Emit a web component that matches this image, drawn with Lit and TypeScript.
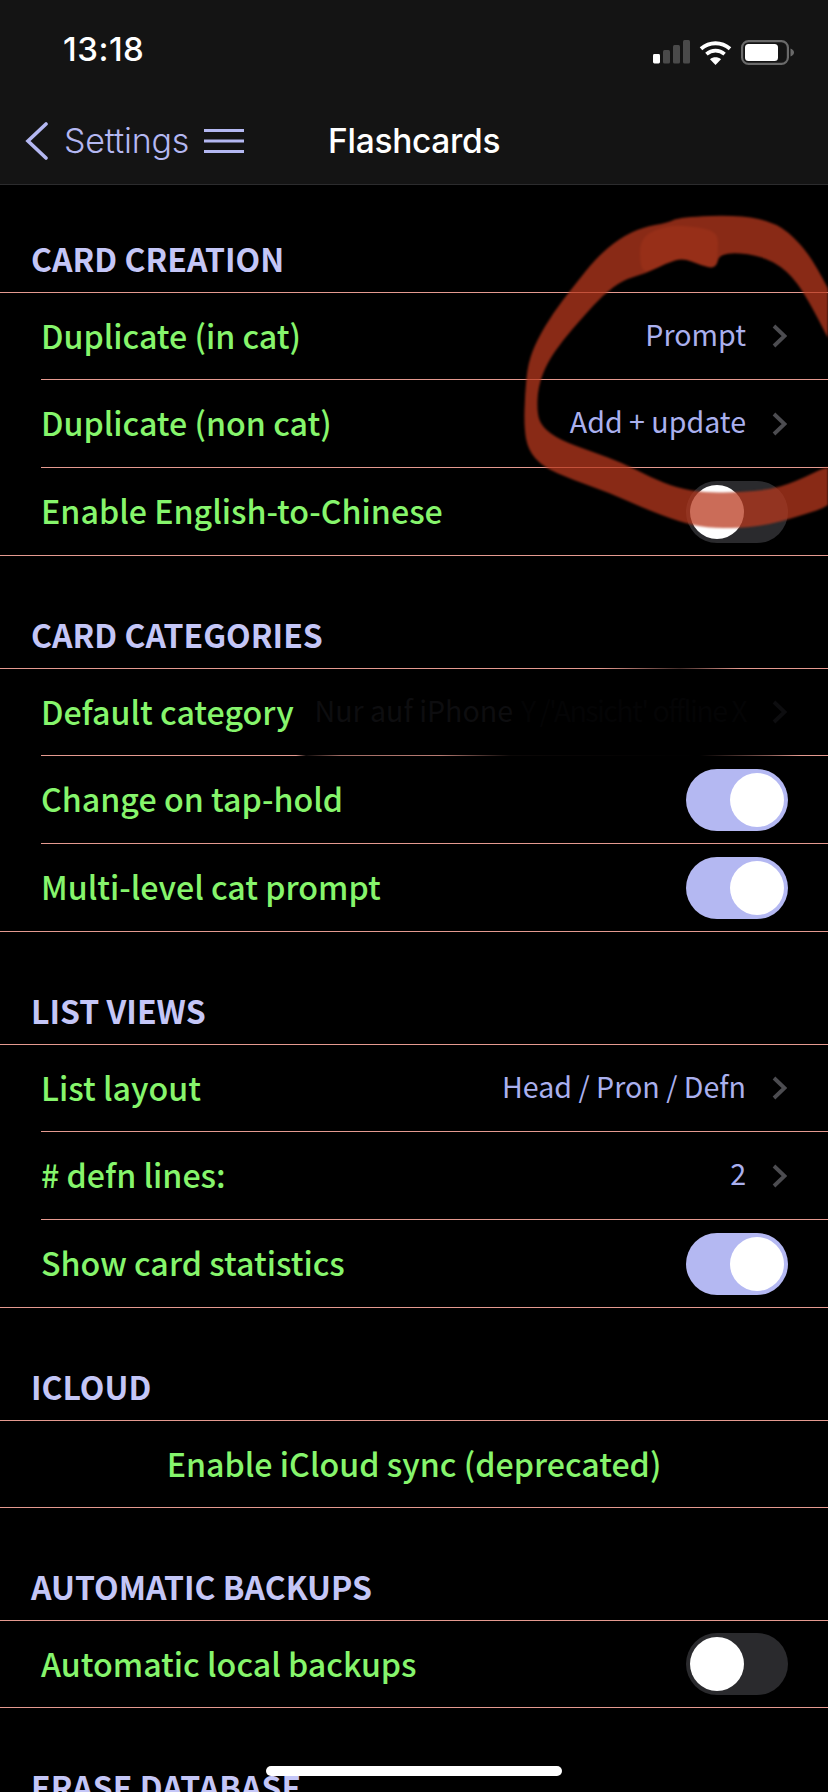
import { LitElement, css, html, svg } from "lit";
import { customElement, property } from "lit/decorators.js";

type Row =
  | { kind: "link"; label: string; value: string; ghost?: string }
  | { kind: "toggle"; label: string; on: boolean }
  | { kind: "center"; label: string };

interface Section {
  title: string;
  rows: Row[];
}

const SECTIONS: Section[] = [
  {
    title: "CARD CREATION",
    rows: [
      { kind: "link", label: "Duplicate (in cat)", value: "Prompt" },
      { kind: "link", label: "Duplicate (non cat)", value: "Add + update" },
      { kind: "toggle", label: "Enable English-to-Chinese", on: false },
    ],
  },
  {
    title: "CARD CATEGORIES",
    rows: [
      { kind: "link", label: "Default category", value: "", ghost: "Nur auf iPhone" },
      { kind: "toggle", label: "Change on tap-hold", on: true },
      { kind: "toggle", label: "Multi-level cat prompt", on: true },
    ],
  },
  {
    title: "LIST VIEWS",
    rows: [
      { kind: "link", label: "List layout", value: "Head / Pron / Defn" },
      { kind: "link", label: "# defn lines:", value: "2" },
      { kind: "toggle", label: "Show card statistics", on: true },
    ],
  },
  {
    title: "ICLOUD",
    rows: [{ kind: "center", label: "Enable iCloud sync (deprecated)" }],
  },
  {
    title: "AUTOMATIC BACKUPS",
    rows: [{ kind: "toggle", label: "Automatic local backups", on: false }],
  },
];

// hand-drawn red circle, traced edge by edge
const BAND: [number, number][] = [
  [680, 217], [740, 215], [777, 223], [800, 243], [817, 267], [840, 312],
  [840, 362], [807, 297], [787, 270], [760, 255], [720, 252], [716, 269],
  [700, 265], [683, 258], [667, 263], [647, 273], [623, 280], [603, 295],
  [583, 317], [563, 340], [547, 363], [538, 387], [537, 413], [542, 427],
  [560, 440], [593, 452], [623, 463], [650, 477], [677, 488], [707, 493],
  [740, 492], [767, 490], [793, 483], [840, 460], [840, 503], [793, 518],
  [767, 525], [740, 528], [707, 528], [680, 522], [643, 508], [610, 493],
  [573, 480], [543, 467], [528, 450], [524, 427], [525, 393], [528, 363],
  [537, 340], [553, 313], [573, 287], [597, 257], [620, 238], [643, 227],
  [667, 223],
];

const PATCH: [number, number][] = [
  [640, 237], [667, 225], [700, 227], [718, 233], [718, 252], [716, 269],
  [700, 265], [683, 258], [667, 263], [647, 273], [640, 267],
];

function smooth(pts: [number, number][]) {
  const mid = (a: [number, number], b: [number, number]) =>
    `${(a[0] + b[0]) / 2} ${(a[1] + b[1]) / 2}`;
  let d = `M${mid(pts[pts.length - 1], pts[0])}`;
  pts.forEach((p, i) => {
    d += ` Q${p[0]} ${p[1]} ${mid(p, pts[(i + 1) % pts.length])}`;
  });
  return d + " Z";
}

@customElement("ui-switch")
export class UiSwitch extends LitElement {
  @property({ type: Boolean, reflect: true }) on = false;

  static styles = css`
    :host {
      display: flex;
      justify-content: flex-start;
      box-sizing: border-box;
      width: 102px;
      height: 62px;
      margin-right: -1px;
      padding: 4px;
      border-radius: 31px;
      background: #2a2a2d;
    }
    :host([on]) {
      justify-content: flex-end;
      background: #b4b8f2;
    }
    .knob {
      width: 54px;
      height: 54px;
      border-radius: 50%;
      background: #fff;
    }
  `;

  render() {
    return html`<div class="knob"></div>`;
  }
}

@customElement("app-root")
export class AppRoot extends LitElement {
  static styles = css`
    :host {
      display: block;
      position: relative;
      width: 828px;
      height: 1792px;
      overflow: hidden;
      background: #000;
      font-family: "Noto Sans CJK SC", "Noto Sans", sans-serif;
    }
    .top {
      height: 185px;
      box-sizing: border-box;
      background: #141414;
      border-bottom: 1px solid #2c2c2e;
      font-family: Inter, "Liberation Sans", sans-serif;
    }
    .status {
      height: 98px;
      box-sizing: border-box;
      padding: 27px 34px 0 63px;
      display: flex;
      justify-content: space-between;
      align-items: flex-start;
    }
    .time {
      color: #fff;
      font-size: 33px;
      font-weight: 500;
      line-height: 44px;
      letter-spacing: 0.5px;
    }
    .status-icons {
      display: flex;
      align-items: center;
      gap: 9px;
      height: 50px;
    }
    .nav {
      display: flex;
      align-items: center;
      height: 85px;
      padding-left: 25px;
      color: #b4b8f2;
    }
    .back {
      font-size: 34px;
      font-weight: 300;
      margin-left: 16px;
      letter-spacing: -0.2px;
    }
    .burger {
      margin-left: 15px;
    }
    .title {
      margin-left: 84px;
      color: #fff;
      font-size: 33.5px;
      font-weight: 500;
      letter-spacing: -0.3px;
    }
    .list {
      display: flex;
      flex-direction: column;
    }
    .head {
      box-sizing: border-box;
      height: 112px;
      display: flex;
      align-items: flex-end;
      padding: 0 0 12px 31px;
      color: #c4c6f7;
      font-size: 32px;
      font-weight: 700;
      line-height: 44px;
    }
    .head.first {
      height: 107px;
    }
    .section {
      border-top: 1px solid #e59a90;
      border-bottom: 1px solid #e59a90;
    }
    .row {
      box-sizing: border-box;
      height: 88px;
      margin-left: 41px;
      padding-right: 41px;
      display: flex;
      align-items: center;
      justify-content: space-between;
      border-bottom: 1px solid #e59a90;
    }
    .row:first-child,
    .row:last-child {
      height: 87px;
    }
    .row:last-child {
      border-bottom: 0;
    }
    .row:only-child {
      height: 86px;
    }
    .label {
      color: #86f56c;
      font-size: 32.2px;
      line-height: 44px;
      font-weight: 500;
      margin-top: -3px;
      white-space: nowrap;
    }
    .row.center {
      margin-left: 0;
      padding-right: 0;
      justify-content: center;
    }
    .link {
      display: flex;
      align-items: center;
      gap: 25px;
      color: #aab0ee;
      font-size: 28.6px;
      line-height: 40px;
      white-space: nowrap;
    }
    .link span {
      margin-top: -5px;
    }
    .link .ghost {
      color: #0d0d0f;
    }
    .link .ghost-rest {
      color: #040405;
      margin-left: 8px;
      letter-spacing: -1.6px;
    }
    .chev {
      display: block;
    }
    .ghost-wrap {
      display: flex;
    }
    .ghost-wrap span {
      margin-top: 0;
    }
    .home {
      position: absolute;
      left: 266px;
      top: 1766px;
      width: 296px;
      height: 10px;
      border-radius: 5px;
      background: #fff;
    }
    .scribble {
      position: absolute;
      left: 0;
      top: 0;
      pointer-events: none;
      filter: blur(1.2px);
    }
    /* the fading toast eats parts of two separators */
    .fade {
      position: absolute;
      left: 0;
      width: 828px;
      height: 1px;
    }
    .fade.upper {
      top: 668px;
      background: linear-gradient(
        90deg,
        transparent 600px,
        rgba(0, 0, 0, 0.7) 680px,
        transparent 740px
      );
    }
    .fade.lower {
      top: 755px;
      background: linear-gradient(
        90deg,
        transparent 296px,
        rgba(0, 0, 0, 0.95) 306px,
        rgba(0, 0, 0, 0.3) 340px,
        rgba(0, 0, 0, 0.2) 440px,
        rgba(0, 0, 0, 0.95) 510px,
        #000 700px,
        rgba(0, 0, 0, 0.4) 770px,
        transparent 800px
      );
    }
  `;

  private chevron(color = "#4c4c50") {
    return html`<svg class="chev" width="16" height="24" viewBox="0 0 16 24" fill="none">
      <path d="M3 2 L13.5 12 L3 22" stroke=${color} stroke-width="3.8" />
    </svg>`;
  }

  private renderRow(row: Row) {
    if (row.kind === "center") {
      return html`<div class="row center"><span class="label">${row.label}</span></div>`;
    }
    if (row.kind === "toggle") {
      return html`<div class="row">
        <span class="label">${row.label}</span>
        <ui-switch ?on=${row.on}></ui-switch>
      </div>`;
    }
    return html`<div class="row">
      <span class="label">${row.label}</span>
      <div class="link">
        ${row.ghost
          ? html`<span class="ghost-wrap">
              <span class="ghost">${row.ghost}</span>
              <span class="ghost-rest">Y /'Ansicht' offline X</span>
            </span>`
          : html`<span>${row.value}</span>`}
        ${this.chevron(row.ghost ? "#0d0d0f" : "#4c4c50")}
      </div>
    </div>`;
  }

  private statusIcons() {
    return html`<svg width="37" height="24" viewBox="0 0 37 24">
        <rect x="0" y="14" width="7" height="9.5" rx="1.4" fill="#fff" />
        <rect x="10" y="10" width="7" height="13.5" rx="1.5" fill="#4a4a4a" />
        <rect x="20" y="5" width="7" height="18.5" rx="1.5" fill="#4a4a4a" />
        <rect x="30" y="0" width="7" height="23.5" rx="1.5" fill="#4a4a4a" />
      </svg>
      <svg width="33" height="25" viewBox="0 0 33 25" fill="none">
        <path d="M2 8.8 C10.5 1.4 22.5 1.4 31 8.8" stroke="#fff" stroke-width="3.8" />
        <path d="M7.4 14.2 C12.8 9.4 20.2 9.4 25.6 14.2" stroke="#fff" stroke-width="3.6" />
        <path d="M16.5 25 L11 19.2 C14.2 16.6 18.8 16.6 22 19.2 Z" fill="#fff" />
      </svg>
      <svg width="53" height="25" viewBox="0 0 53 25">
        <rect x="1.1" y="1.1" width="45.8" height="22.8" rx="6.5" fill="none" stroke="#6a6a6a" stroke-width="2.2" />
        <rect x="4" y="4" width="33" height="17" rx="3.5" fill="#fff" />
        <path d="M49.5 8.5 C51.8 9.5 53 10.8 53 12.5 C53 14.2 51.8 15.5 49.5 16.5 Z" fill="#6a6a6a" />
      </svg>`;
  }

  private scribble() {
    return svg`
      <path d=${smooth(BAND)} fill="#b9381e" opacity="0.74" />
      <path d=${smooth(PATCH)} fill="#c8431f" opacity="0.22" />
    `;
  }

  render() {
    return html`
      <div class="top">
        <div class="status">
          <span class="time">13:18</span>
          <div class="status-icons">${this.statusIcons()}</div>
        </div>
        <div class="nav">
          <svg width="23" height="38" viewBox="0 0 23 38" fill="none">
            <path d="M21 2 L3 19 L21 36" stroke="#b4b8f2" stroke-width="3.6" stroke-linecap="round" />
          </svg>
          <span class="back">Settings</span>
          <svg class="burger" width="40" height="24" viewBox="0 0 40 24">
            <rect y="0" width="40" height="3" fill="#b4b8f2" />
            <rect y="10.5" width="40" height="3" fill="#b4b8f2" />
            <rect y="21" width="40" height="3" fill="#b4b8f2" />
          </svg>
          <span class="title">Flashcards</span>
        </div>
      </div>
      <div class="list">
        ${SECTIONS.map(
          (s, i) => html`
            <div class="head ${i === 0 ? "first" : ""}">${s.title}</div>
            <div class="section">${s.rows.map((r) => this.renderRow(r))}</div>
          `
        )}
        <div class="head">ERASE DATABASE</div>
      </div>
      <div class="fade upper"></div>
      <div class="fade lower"></div>
      <svg class="scribble" width="828" height="700" viewBox="0 0 828 700">${this.scribble()}</svg>
      <div class="home"></div>
    `;
  }
}
